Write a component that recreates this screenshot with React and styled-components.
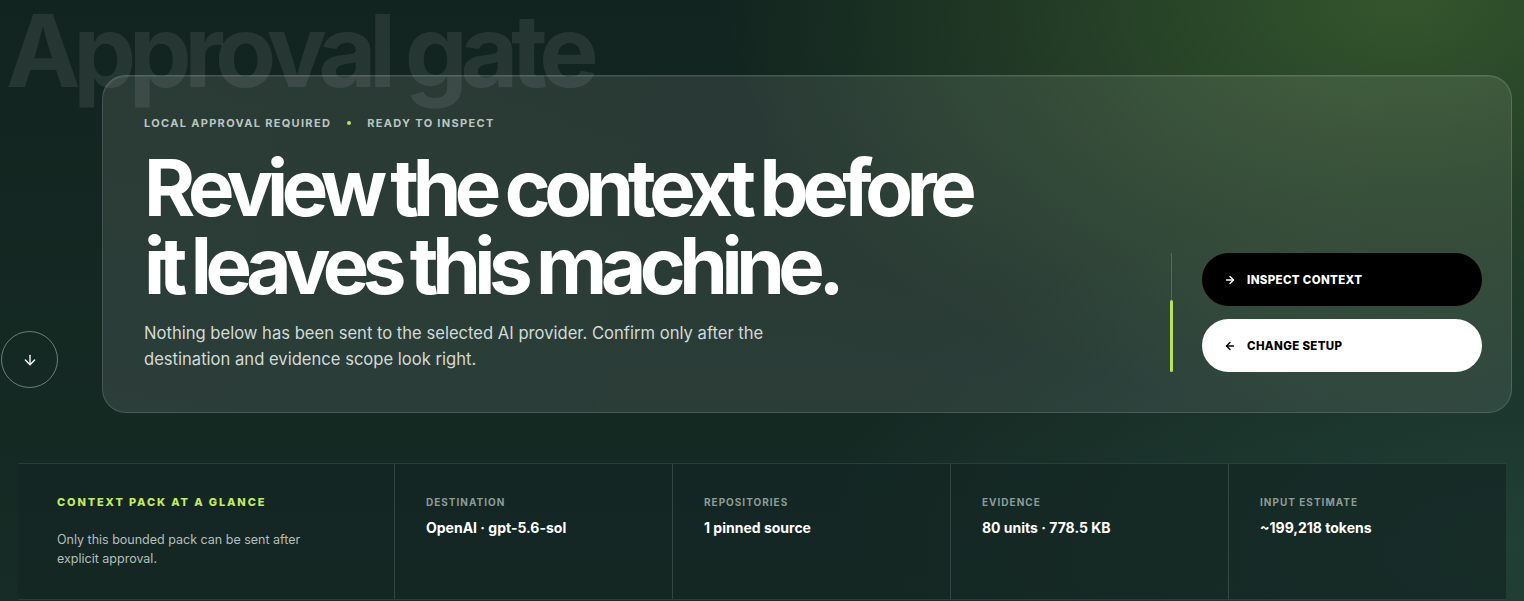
import React from 'react';
import styled, { createGlobalStyle } from 'styled-components';
import { ArrowDown, ArrowLeft, ArrowRight } from 'lucide-react';

const GlobalStyle = createGlobalStyle`
  * {
    box-sizing: border-box;
  }

  html,
  body {
    margin: 0;
    padding: 0;
    background: #13251f;
  }

  body {
    font-family: Inter, 'Noto Sans', 'Liberation Sans', sans-serif;
    color: #ffffff;
    -webkit-font-smoothing: antialiased;
  }
`;

const Page = styled.main`
  position: relative;
  min-height: 601px;
  overflow: hidden;
  padding-bottom: 40px;
  background:
    radial-gradient(ellipse 680px 420px at 92% 0%, rgba(60, 98, 48, 0.8) 0%, rgba(60, 98, 48, 0) 100%),
    radial-gradient(ellipse 700px 360px at 100% 85%, rgba(40, 78, 64, 0.6) 0%, rgba(40, 78, 64, 0) 100%),
    linear-gradient(180deg, #12241f 0%, #172c26 100%);
`;

const Watermark = styled.div`
  position: relative;
  z-index: 0;
  margin: 0 0 -32px 6px;
  height: 107px;
  font-size: 100px;
  font-weight: 700;
  letter-spacing: -0.075em;
  line-height: 102px;
  white-space: nowrap;
  color: rgba(255, 255, 255, 0.085);
  user-select: none;
`;

const Card = styled.section`
  position: relative;
  z-index: 1;
  margin: 0 12px 0 102px;
  padding: 39px 29px 40px 41px;
  display: flex;
  align-items: flex-end;
  justify-content: space-between;
  border-radius: 24px;
  border: 1px solid rgba(255, 255, 255, 0.14);
  background: linear-gradient(100deg, rgba(255, 255, 255, 0.1) 0%, rgba(255, 255, 255, 0.085) 100%);
  box-shadow: inset 0 1px 0 rgba(255, 255, 255, 0.08);
`;

const Intro = styled.div`
  display: flex;
  flex-direction: column;
`;

const Eyebrow = styled.div`
  display: flex;
  align-items: center;
  gap: 16px;
  font-size: 11px;
  line-height: 16px;
  font-weight: 700;
  letter-spacing: 0.12em;
  text-transform: uppercase;
  color: #bcc6c1;
`;

const Dot = styled.span`
  width: 4px;
  height: 4px;
  border-radius: 50%;
  background: #b7e35c;
`;

const Headline = styled.h1`
  margin: 18px 0 0;
  font-size: 78px;
  line-height: 78px;
  font-weight: 700;
  letter-spacing: -0.082em;
  word-spacing: -0.03em;
  color: #ffffff;
`;

const Lead = styled.p`
  margin: 15px 0 0;
  max-width: 630px;
  font-size: 16.6px;
  line-height: 26px;
  color: #d3dad6;
`;

const Actions = styled.div`
  display: flex;
  align-items: stretch;
  gap: 29px;
`;

const Rail = styled.div`
  width: 3px;
  display: flex;
  flex-direction: column;
  align-items: center;
`;

const RailTrack = styled.span`
  flex: 1;
  width: 1px;
  background: rgba(255, 255, 255, 0.18);
`;

const RailFill = styled.span`
  height: 72px;
  width: 3px;
  border-radius: 2px;
  background: #b5e35a;
`;

const ButtonStack = styled.div`
  display: flex;
  flex-direction: column;
  gap: 13px;
`;

const PillButton = styled.button`
  display: flex;
  align-items: center;
  gap: 11px;
  width: 280px;
  height: 53px;
  padding: 0 22px;
  border: none;
  border-radius: 999px;
  font-family: inherit;
  font-size: 11.5px;
  font-weight: 800;
  letter-spacing: 0.03em;
  text-transform: uppercase;
  cursor: pointer;
  background: ${({ variant }) => (variant === 'dark' ? '#000000' : '#ffffff')};
  color: ${({ variant }) => (variant === 'dark' ? '#ffffff' : '#000000')};
`;

const ScrollButton = styled.button`
  position: absolute;
  left: 1px;
  top: 331px;
  z-index: 2;
  width: 57px;
  height: 57px;
  display: flex;
  align-items: center;
  justify-content: center;
  border-radius: 50%;
  border: 1px solid rgba(255, 255, 255, 0.38);
  background: transparent;
  color: #ffffff;
  cursor: pointer;
`;

const Stats = styled.section`
  margin: 50px 18px 0;
  display: grid;
  grid-template-columns: 376px repeat(4, 1fr);
  height: 137px;
  border-top: 1px solid rgba(255, 255, 255, 0.1);
  border-bottom: 1px solid rgba(255, 255, 255, 0.1);
  background: rgba(20, 38, 35, 0.72);
`;

const StatCell = styled.div`
  padding: ${({ lead }) => (lead ? '31px 39px' : '31px 31px')};
  border-left: ${({ lead }) => (lead ? 'none' : '1px solid rgba(255, 255, 255, 0.14)')};
`;

const StatLabel = styled.div`
  font-size: ${({ lead }) => (lead ? '11px' : '10px')};
  line-height: 14px;
  font-weight: ${({ lead }) => (lead ? 800 : 700)};
  letter-spacing: ${({ lead }) => (lead ? '0.17em' : '0.1em')};
  text-transform: uppercase;
  color: ${({ lead }) => (lead ? '#c3ec5e' : '#8c9c96')};
`;

const StatValue = styled.div`
  margin-top: 10px;
  font-size: 14px;
  line-height: 18px;
  font-weight: 700;
  color: #ffffff;
`;

const StatNote = styled.p`
  margin: 21px 0 0;
  max-width: 260px;
  font-size: 12.5px;
  line-height: 19px;
  color: #b4bfba;
`;

const stats = [
  { label: 'Destination', value: 'OpenAI · gpt-5.6-sol' },
  { label: 'Repositories', value: '1 pinned source' },
  { label: 'Evidence', value: '80 units · 778.5 KB' },
  { label: 'Input estimate', value: '~199,218 tokens' },
];

const App = () => {
  return (
    <>
      <GlobalStyle />
      <Page>
        <Watermark aria-hidden="true">Approval gate</Watermark>
        <Card>
          <Intro>
            <Eyebrow>
              <span>Local approval required</span>
              <Dot />
              <span>Ready to inspect</span>
            </Eyebrow>
            <Headline>
              Review the context before
              <br />
              it leaves this machine.
            </Headline>
            <Lead>
              Nothing below has been sent to the selected AI provider. Confirm only after the
              destination and evidence scope look right.
            </Lead>
          </Intro>
          <Actions>
            <Rail>
              <RailTrack />
              <RailFill />
            </Rail>
            <ButtonStack>
              <PillButton variant="dark">
                <ArrowRight size={12} strokeWidth={2.75} />
                Inspect context
              </PillButton>
              <PillButton variant="light">
                <ArrowLeft size={12} strokeWidth={2.75} />
                Change setup
              </PillButton>
            </ButtonStack>
          </Actions>
        </Card>
        <ScrollButton aria-label="Scroll down">
          <ArrowDown size={16} strokeWidth={2} />
        </ScrollButton>
        <Stats>
          <StatCell lead>
            <StatLabel lead>Context pack at a glance</StatLabel>
            <StatNote>Only this bounded pack can be sent after explicit approval.</StatNote>
          </StatCell>
          {stats.map((item) => (
            <StatCell key={item.label}>
              <StatLabel>{item.label}</StatLabel>
              <StatValue>{item.value}</StatValue>
            </StatCell>
          ))}
        </Stats>
      </Page>
    </>
  );
};

export default App;
